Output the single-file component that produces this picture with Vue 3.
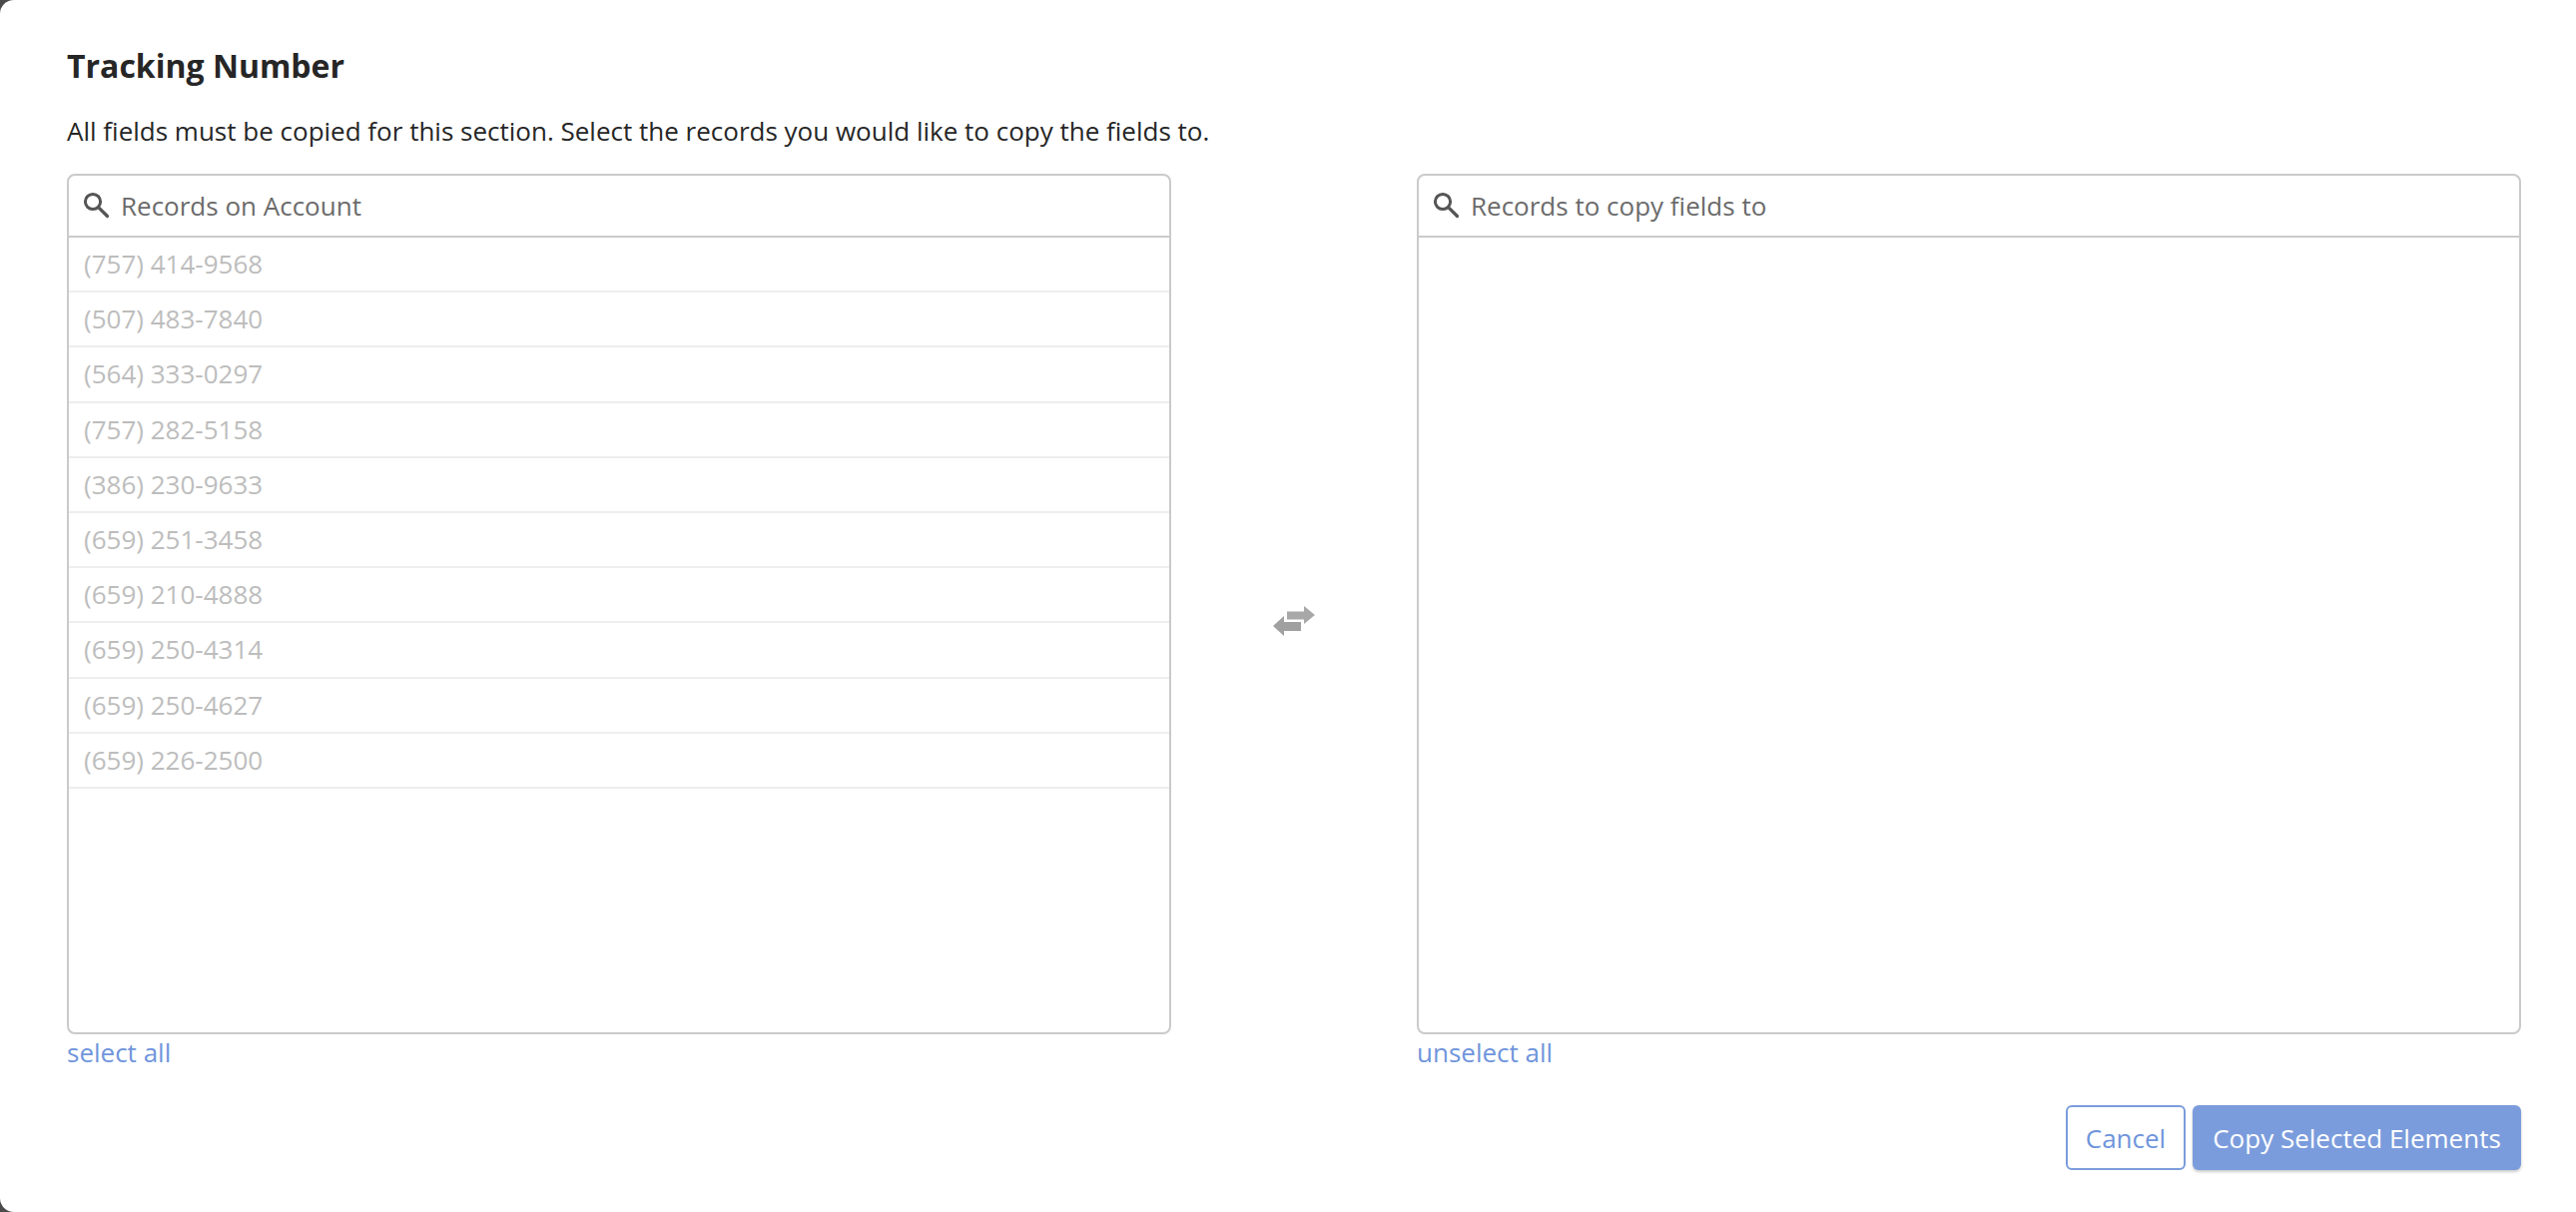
<script setup>
const records = [
  '(757) 414-9568',
  '(507) 483-7840',
  '(564) 333-0297',
  '(757) 282-5158',
  '(386) 230-9633',
  '(659) 251-3458',
  '(659) 210-4888',
  '(659) 250-4314',
  '(659) 250-4627',
  '(659) 226-2500',
]
</script>

<template>
  <div class="modal">
    <h1 class="title">Tracking Number</h1>
    <p class="desc">All fields must be copied for this section. Select the records you would like to copy the fields to.</p>
    <div class="columns">
      <div class="col">
        <div class="panel">
          <div class="head">
            <svg class="search" viewBox="0 0 28 28" width="28" height="28">
              <circle cx="11" cy="11" r="7.6" fill="none" stroke="#555" stroke-width="3" />
              <path d="M16.8 16.8 L25.5 25.5" stroke="#555" stroke-width="3.2" stroke-linecap="round" />
            </svg>
            <span>Records on Account</span>
          </div>
          <ul class="list">
            <li v-for="r in records" :key="r" class="row">{{ r }}</li>
          </ul>
        </div>
        <a class="link">select all</a>
      </div>
      <div class="swap">
        <svg class="swap-icon" viewBox="0 0 42 30" width="42" height="30">
          <path d="M14 5.5 H31 V0 L42 9 L31 18 V13.5 H14 Z" fill="#a8a8a8" />
          <path d="M28 16 H11 V10 L0 20 L11 30 V25 H28 Z" fill="#a0a0a0" />
        </svg>
      </div>
      <div class="col">
        <div class="panel">
          <div class="head">
            <svg class="search" viewBox="0 0 28 28" width="28" height="28">
              <circle cx="11" cy="11" r="7.6" fill="none" stroke="#555" stroke-width="3" />
              <path d="M16.8 16.8 L25.5 25.5" stroke="#555" stroke-width="3.2" stroke-linecap="round" />
            </svg>
            <span>Records to copy fields to</span>
          </div>
        </div>
        <a class="link">unselect all</a>
      </div>
    </div>
    <div class="actions">
      <button class="btn outline">Cancel</button>
      <button class="btn primary">Copy Selected Elements</button>
    </div>
  </div>
</template>

<style>
html, body { margin: 0; background: #4a4a4a; }
</style>

<style scoped>
.modal {
  box-sizing: border-box;
  width: 2580px;
  height: 1214px;
  padding: 46px 55px 0 67px;
  background: #fff;
  border-radius: 14px 0 0 14px;
  font-family: "Open Sans", sans-serif;
  color: #262626;
}
.title {
  margin: 0;
  font-size: 32px;
  line-height: 40px;
  font-weight: 700;
}
.desc {
  margin: 27px 0 0;
  font-size: 26px;
  line-height: 36px;
}
.columns {
  display: flex;
  margin-top: 25px;
}
.col {
  width: 1106px;
  flex: none;
}
.panel {
  box-sizing: border-box;
  height: 862px;
  border: 2px solid #cacaca;
  border-radius: 8px;
  overflow: hidden;
}
.head {
  display: flex;
  align-items: center;
  gap: 11px;
  box-sizing: border-box;
  height: 62px;
  padding: 0 12px 0 13px;
  border-bottom: 2px solid #cacaca;
  font-size: 26px;
  color: #6b6b6b;
}
.search { flex: none; margin-top: -3px; }
.list { margin: 0; padding: 0; list-style: none; }
.row {
  box-sizing: border-box;
  height: 55.2px;
  line-height: 53px;
  padding-left: 15px;
  border-bottom: 2px solid #eeeeee;
  font-size: 26px;
  color: #bdbdbd;
}
.link {
  display: block;
  margin-top: 1px;
  font-size: 26px;
  line-height: 34px;
  color: #6f95dc;
}
.swap {
  flex: 1;
  display: flex;
  align-items: center;
  justify-content: center;
  height: 862px;
  padding-top: 34px;
  box-sizing: border-box;
}
.swap-icon { filter: blur(0.6px); }
.actions {
  display: flex;
  justify-content: flex-end;
  gap: 7px;
  margin-top: 36px;
}
.btn {
  box-sizing: border-box;
  height: 65px;
  border-radius: 6px;
  font-family: inherit;
  font-size: 26px;
  padding: 0;
}
.outline {
  width: 120px;
  background: #fff;
  border: 2px solid #7b9cdc;
  color: #6f95dc;
}
.primary {
  width: 329px;
  background: #7b9cdc;
  border: none;
  color: #fff;
  box-shadow: 0 2px 3px rgba(0, 0, 0, 0.2);
}
</style>
